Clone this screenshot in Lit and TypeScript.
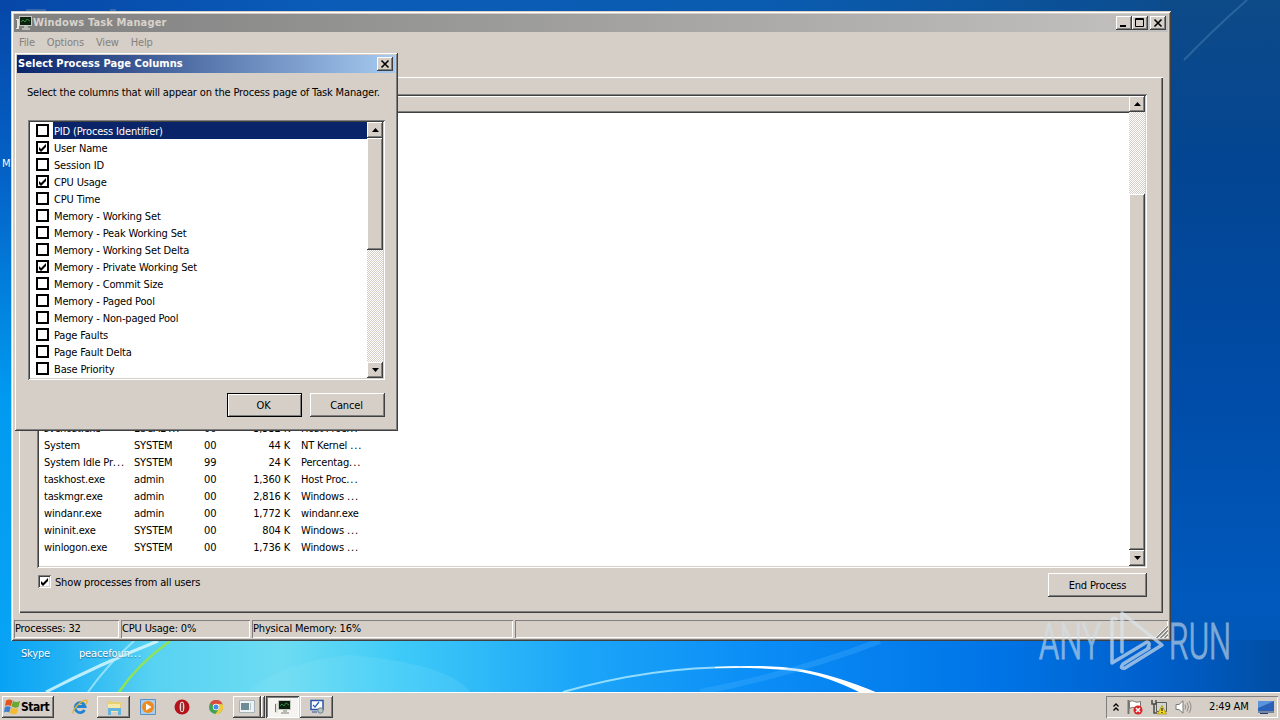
import { LitElement, html, css, svg } from 'lit';
import { customElement, property } from 'lit/decorators.js';
import { classMap } from 'lit/directives/class-map.js';

interface ProcessRow {
  name: string;
  user: string;
  cpu: string;
  memory: string;
  description: string;
}

interface ColumnOption {
  label: string;
  checked: boolean;
}

const PROCESSES: ProcessRow[] = [
  { name: 'svchost.exe', user: 'LOCAL ...', cpu: '00', memory: '3,532 K', description: 'Host Proc...' },
  { name: 'System', user: 'SYSTEM', cpu: '00', memory: '44 K', description: 'NT Kernel ...' },
  { name: 'System Idle Pr...', user: 'SYSTEM', cpu: '99', memory: '24 K', description: 'Percentag...' },
  { name: 'taskhost.exe', user: 'admin', cpu: '00', memory: '1,360 K', description: 'Host Proc...' },
  { name: 'taskmgr.exe', user: 'admin', cpu: '00', memory: '2,816 K', description: 'Windows ...' },
  { name: 'windanr.exe', user: 'admin', cpu: '00', memory: '1,772 K', description: 'windanr.exe' },
  { name: 'wininit.exe', user: 'SYSTEM', cpu: '00', memory: '804 K', description: 'Windows ...' },
  { name: 'winlogon.exe', user: 'SYSTEM', cpu: '00', memory: '1,736 K', description: 'Windows ...' },
];

const COLUMNS: ColumnOption[] = [
  { label: 'PID (Process Identifier)', checked: false },
  { label: 'User Name', checked: true },
  { label: 'Session ID', checked: false },
  { label: 'CPU Usage', checked: true },
  { label: 'CPU Time', checked: false },
  { label: 'Memory - Working Set', checked: false },
  { label: 'Memory - Peak Working Set', checked: false },
  { label: 'Memory - Working Set Delta', checked: false },
  { label: 'Memory - Private Working Set', checked: true },
  { label: 'Memory - Commit Size', checked: false },
  { label: 'Memory - Paged Pool', checked: false },
  { label: 'Memory - Non-paged Pool', checked: false },
  { label: 'Page Faults', checked: false },
  { label: 'Page Fault Delta', checked: false },
  { label: 'Base Priority', checked: false },
];

const base = css`
  * {
    box-sizing: border-box;
  }
  svg {
    display: block;
  }
  .raised {
    background: #d5cfc8;
    box-shadow: inset -1px -1px #404040, inset 1px 1px #ffffff, inset -2px -2px #808080;
  }
  .dots {
    letter-spacing: 0.9px;
  }
`;

const checkMark = svg`<path d="M0 2v3l2 2 5-5V-1L2 4z" />`;

const monitorIcon = html`
  <svg width="16" height="16" viewBox="0 0 16 16">
    <path d="M0 4h3v10H0z" fill="#e4e4dc" />
    <path d="M0.5 5v8" stroke="#777" />
    <rect x="3" y="1" width="13" height="10" fill="#c4c8c0" />
    <rect x="4" y="2" width="11" height="8" fill="#0c2010" />
    <path d="M5 7l2-2 2 2 2-3 3 2" fill="none" stroke="#2f8a3b" />
    <path d="M8 11h4v2h2v2H6v-2h2z" fill="#b8bab4" />
  </svg>
`;

// Truncated labels get a wider ellipsis than the body text spacing.
function clipped(text: string) {
  return text.endsWith('...') ? html`${text.slice(0, -3)}<span class="dots">...</span>` : text;
}

@customElement('scroll-bar')
export class ScrollBar extends LitElement {
  static styles = [
    base,
    css`
      :host {
        display: flex;
        flex-direction: column;
        width: 16px;
        background: repeating-conic-gradient(#ffffff 0 25%, #d5cfc8 0 50%) 0 0 / 2px 2px;
      }
      .arrow {
        height: 16px;
        flex: none;
        display: flex;
        align-items: center;
        justify-content: center;
      }
      .thumb {
        flex: none;
      }
      .rest {
        flex: 1;
      }
    `,
  ];

  @property({ type: Number }) offset = 0;
  @property({ type: Number }) size = 100;

  render() {
    return html`
      <div class="arrow raised">
        <svg width="7" height="4" viewBox="0 0 7 4"><path d="M0 4L3.5 0 7 4z" /></svg>
      </div>
      <div style="height:${this.offset}px"></div>
      <div class="thumb raised" style="height:${this.size}px"></div>
      <div class="rest"></div>
      <div class="arrow raised">
        <svg width="7" height="4" viewBox="0 0 7 4"><path d="M0 0h7L3.5 4z" /></svg>
      </div>
    `;
  }
}

@customElement('caption-button')
export class CaptionButton extends LitElement {
  static styles = [
    base,
    css`
      :host {
        display: block;
        width: 16px;
        height: 14px;
      }
      .raised {
        height: 100%;
      }
      path {
        fill: none;
        stroke: #000;
      }
    `,
  ];

  @property({ type: String }) kind = 'close';

  glyph() {
    switch (this.kind) {
      case 'minimize':
        return svg`<path d="M4 10h6" stroke-width="2" />`;
      case 'maximize':
        return svg`<path d="M3.5 2.5h8v8h-8zM3 3.5h9" />`;
      default:
        return svg`<path d="M4.5 3.5l7 7M11.5 3.5l-7 7" stroke-width="1.6" />`;
    }
  }

  render() {
    return html`
      <div class="raised">
        <svg width="16" height="14" viewBox="0 0 16 14">${this.glyph()}</svg>
      </div>
    `;
  }
}

@customElement('task-manager')
export class TaskManager extends LitElement {
  static styles = [
    base,
    css`
      :host {
        display: flex;
        flex-direction: column;
        padding: 3px;
        background: #d5cfc8;
        box-shadow: inset 1px 1px #d5cfc8, inset -1px -1px #404040, inset 2px 2px #ffffff, inset -2px -2px #808080;
      }
      .title {
        height: 18px;
        flex: none;
        display: flex;
        align-items: center;
        padding: 0 2px;
        background: linear-gradient(90deg, #808080, #c2c1bf);
        color: #d8d2ca;
        font-weight: bold;
        letter-spacing: 0.15px;
      }
      .title span {
        flex: 1;
        padding-left: 1px;
      }
      .title .close {
        margin-left: 2px;
      }
      .menu {
        height: 20px;
        flex: none;
        display: flex;
        align-items: center;
        padding: 2px 0 0 5px;
        gap: 12px;
        color: #85817c;
      }
      .page {
        flex: 1;
        min-height: 0;
        margin: 25px 5px 7px 5px;
        padding: 17px 16px 14px 18px;
        display: flex;
        flex-direction: column;
        box-shadow: inset 1px 1px #ffffff, inset -1px -1px #404040, inset -2px -2px #808080;
      }
      .list {
        height: 474px;
        flex: none;
        display: flex;
        padding: 2px;
        background: #ffffff;
        box-shadow: inset 1px 1px #808080, inset -1px -1px #ffffff, inset 2px 2px #404040, inset -2px -2px #d5cfc8;
      }
      .table {
        flex: 1;
        display: flex;
        flex-direction: column;
      }
      .header {
        height: 17px;
        flex: none;
        background: #d5cfc8;
        box-shadow: inset 0 1px #ffffff, inset 0 -1px #404040, inset 0 -2px #808080;
      }
      .rows {
        flex: 1;
        min-height: 0;
        display: flex;
        flex-direction: column;
        justify-content: flex-end;
        padding: 0 0 10px 5px;
      }
      .row {
        height: 17px;
        flex: none;
        display: grid;
        grid-template-columns: 90px 70px 45px 41px 100px;
        align-items: center;
      }
      .memory {
        justify-self: end;
      }
      .description {
        padding-left: 11px;
      }
      .actions {
        flex: 1;
        display: flex;
        justify-content: space-between;
        align-items: flex-start;
      }
      .all-users {
        display: flex;
        align-items: flex-start;
        gap: 4px;
        padding: 7px 0 0 1px;
      }
      .all-users div:last-child {
        padding-top: 1px;
      }
      .box {
        width: 13px;
        height: 13px;
        background: #ffffff;
        box-shadow: inset 1px 1px #808080, inset -1px -1px #ffffff, inset 2px 2px #404040, inset -2px -2px #d5cfc8;
      }
      .end {
        width: 99px;
        height: 24px;
        margin-top: 5px;
        padding-top: 1px;
        display: flex;
        align-items: center;
        justify-content: center;
      }
      .status {
        height: 18px;
        flex: none;
        display: grid;
        grid-template-columns: 105px 129px 261px 1fr;
        gap: 2px;
      }
      .cell {
        display: flex;
        align-items: center;
        padding-left: 1px;
        box-shadow: inset 1px 1px #808080, inset -1px -1px #ffffff;
      }
      .last {
        justify-content: flex-end;
        align-items: flex-end;
      }
    `,
  ];

  render() {
    return html`
      <div class="title">
        ${monitorIcon}
        <span>Windows Task Manager</span>
        <caption-button kind="minimize"></caption-button>
        <caption-button kind="maximize"></caption-button>
        <caption-button class="close"></caption-button>
      </div>
      <div class="menu">
        <div>File</div>
        <div>Options</div>
        <div>View</div>
        <div>Help</div>
      </div>
      <div class="page">
        <div class="list">
          <div class="table">
            <div class="header"></div>
            <div class="rows">
              ${PROCESSES.map(
                (p) => html`
                  <div class="row">
                    <div>${clipped(p.name)}</div>
                    <div>${clipped(p.user)}</div>
                    <div>${p.cpu}</div>
                    <div class="memory">${p.memory}</div>
                    <div class="description">${clipped(p.description)}</div>
                  </div>
                `
              )}
            </div>
          </div>
          <scroll-bar .offset=${82} .size=${356}></scroll-bar>
        </div>
        <div class="actions">
          <div class="all-users">
            <div class="box">
              <svg width="13" height="13" viewBox="-3 -4 13 13">${checkMark}</svg>
            </div>
            <div>Show processes from all users</div>
          </div>
          <div class="end raised">End Process</div>
        </div>
      </div>
      <div class="status">
        <div class="cell">Processes: 32</div>
        <div class="cell">CPU Usage: 0%</div>
        <div class="cell">Physical Memory: 16%</div>
        <div class="cell last">
          <svg width="13" height="13" viewBox="0 0 13 13">
            <path d="M0 13L13 0M4 13l9-9M8 13l5-5" stroke="#ffffff" />
            <path d="M1.5 13L13 1.5M5.5 13L13 5.5M9.5 13L13 9.5" stroke="#808080" stroke-width="1.5" />
          </svg>
        </div>
      </div>
    `;
  }
}

@customElement('columns-dialog')
export class ColumnsDialog extends LitElement {
  static styles = [
    base,
    css`
      :host {
        display: flex;
        flex-direction: column;
        padding: 3px;
        background: #d5cfc8;
        box-shadow: inset 1px 1px #d5cfc8, inset -1px -1px #404040, inset 2px 2px #ffffff, inset -2px -2px #808080;
      }
      .title {
        height: 18px;
        flex: none;
        display: flex;
        align-items: center;
        justify-content: space-between;
        padding: 0 2px 0 1px;
        background: linear-gradient(90deg, #0a246a, #a6caf0);
        color: #ffffff;
        font-weight: bold;
        letter-spacing: 0.05px;
      }
      .hint {
        height: 38px;
        flex: none;
        display: flex;
        align-items: center;
        padding: 1px 0 0 10px;
        white-space: nowrap;
      }
      .list {
        height: 260px;
        flex: none;
        margin: 9px 10px 0 11px;
        padding: 2px;
        display: flex;
        background: #ffffff;
        box-shadow: inset 1px 1px #808080, inset -1px -1px #ffffff, inset 2px 2px #404040, inset -2px -2px #d5cfc8;
      }
      .options {
        flex: 1;
      }
      .option {
        height: 17px;
        display: flex;
        align-items: center;
        padding-left: 6px;
        gap: 4px;
      }
      .box {
        width: 13px;
        height: 13px;
        flex: none;
        border: 2px solid #000;
        background: #ffffff;
      }
      .label {
        flex: 1;
        height: 17px;
        line-height: 19px;
        padding-left: 1px;
      }
      .selected .label {
        background: #0a246a;
        color: #ffffff;
      }
      .buttons {
        display: flex;
        justify-content: flex-end;
        gap: 8px;
        padding: 13px 10px 0 0;
      }
      .button {
        width: 75px;
        height: 24px;
        padding: 1px 2px 0 0;
        display: flex;
        align-items: center;
        justify-content: center;
      }
      .default {
        border: 1px solid #000;
        box-shadow: inset 1px 1px #ffffff, inset -1px -1px #808080;
      }
    `,
  ];

  render() {
    return html`
      <div class="title">
        <span>Select Process Page Columns</span>
        <caption-button></caption-button>
      </div>
      <div class="hint">Select the columns that will appear on the Process page of Task Manager.</div>
      <div class="list">
        <div class="options">
          ${COLUMNS.map(
            (c, i) => html`
              <div class=${classMap({ option: true, selected: i === 0 })}>
                <div class="box">
                  ${c.checked ? html`<svg width="9" height="9" viewBox="-1 -2 9 9">${checkMark}</svg>` : ''}
                </div>
                <div class="label">${c.label}</div>
              </div>
            `
          )}
        </div>
        <scroll-bar .offset=${0} .size=${112}></scroll-bar>
      </div>
      <div class="buttons">
        <div class="button raised default">OK</div>
        <div class="button raised">Cancel</div>
      </div>
    `;
  }
}

@customElement('task-bar')
export class TaskBar extends LitElement {
  static styles = [
    base,
    css`
      :host {
        display: flex;
        align-items: center;
        padding: 3px 2px 2px;
        background: #d5cfc8;
        border-top: 1px solid #ffffff;
      }
      .start {
        width: 52px;
        height: 22px;
        display: flex;
        align-items: center;
        gap: 1px;
        padding-left: 2px;
        font-size: 12px;
        font-weight: bold;
        letter-spacing: -0.5px;
      }
      .launch {
        display: flex;
        margin-left: 9px;
        gap: 1px;
      }
      .item {
        width: 33px;
        height: 22px;
        display: flex;
        align-items: center;
        justify-content: center;
      }
      .group {
        width: 28px;
      }
      .stack {
        width: 4px;
        height: 22px;
        margin-left: -1px;
      }
      .pressed {
        background: #f6f4f1;
        box-shadow: inset 1px 1px #404040, inset -1px -1px #ffffff, inset 2px 2px #808080;
      }
      .spacer {
        flex: 1;
      }
      .tray {
        width: 172px;
        height: 22px;
        display: flex;
        align-items: center;
        padding-left: 7px;
        gap: 8px;
        box-shadow: inset 1px 1px #808080, inset -1px -1px #ffffff;
      }
      .clock {
        margin: 0 1px 0 9px;
        white-space: nowrap;
      }
    `,
  ];

  render() {
    return html`
      <div class="start raised">
        <svg width="16" height="16" viewBox="0 0 16 16">
          <path d="M2 1.500q3.500-2 6.500 0L7 7q-3-1.500-6 0z" fill="#e2551f" />
          <path d="M9 2q3.500 2 7 0l-1.500 6q-3.500 1.500-7-.5z" fill="#6aa832" />
          <path d="M.8 8q3.200-1.500 6 0L5.200 13.500q-3-1.500-5.200 0z" fill="#3f7fd0" />
          <path d="M7.300 8.500q3.500 2 7 .5l-1.500 5.500q-3.500 1.500-7-.5z" fill="#f4bb2c" />
        </svg>
        <span>Start</span>
      </div>
      <div class="launch">
        <div class="item">
          <svg width="16" height="16" viewBox="0 0 16 16">
            <path d="M12.500 11A5 5 0 1 1 13 7.500H5" fill="none" stroke="#2482d2" stroke-width="2.800" />
            <path d="M1.500 14.500C-1 12 8 2 14 1.200c1.500 0 1.500 1.800 0 4" fill="none" stroke="#e6b52c" stroke-width="1.300" />
          </svg>
        </div>
        <div class="item raised">
          <svg width="16" height="16" viewBox="0 0 16 16">
            <path d="M1 2h5l1 1h8v10H1z" fill="#e8cf74" />
            <path d="M2 5h12v8H2z" fill="#f6e9a8" />
            <path d="M2 9h13v7h-3v-4H5v4H2z" fill="#63b5dd" />
          </svg>
        </div>
        <div class="item">
          <svg width="16" height="16" viewBox="0 0 16 16">
            <path d="M.5.5h15v15H.5z" fill="#a9cdea" stroke="#5892c8" />
            <circle cx="8" cy="8" r="6" fill="#ef8a1d" />
            <path d="M6 4.500L11.500 8 6 11.500z" fill="#ffffff" />
          </svg>
        </div>
        <div class="item">
          <svg width="16" height="16" viewBox="0 0 16 16">
            <circle cx="8" cy="8" r="7.500" fill="#b5121b" />
            <ellipse cx="8" cy="8" rx="2.400" ry="5.200" fill="#e4dcd6" />
            <path d="M8 4v8" stroke="#7a1015" stroke-width="1.500" />
          </svg>
        </div>
        <div class="item">
          <svg width="14" height="14" viewBox="0 0 14 14">
            <circle cx="7" cy="7" r="7" fill="#3ea254" />
            <path d="M7 7L.9 3.500A7 7 0 0 1 13.500 4.200L7 4z" fill="#dd4b3c" />
            <path d="M13.500 4.200A7 7 0 0 1 6.500 14L10 8.500 8 4z" fill="#f6c83c" />
            <circle cx="7" cy="7" r="3.200" fill="#ffffff" />
            <circle cx="7" cy="7" r="2.500" fill="#4a8bea" />
          </svg>
        </div>
        <div class="item group raised">
          <svg width="16" height="14" viewBox="0 0 16 14">
            <path d="M.5.5h15v12H.5z" fill="#eef2f4" stroke="#a8b4ba" />
            <path d="M2 3h8v7H2z" fill="#6d8d96" />
            <path d="M11.500 3v7" stroke="#b6c2c8" />
          </svg>
        </div>
        <div class="stack raised"></div>
        <div class="item pressed">${monitorIcon}</div>
        <div class="item raised">
          <svg width="16" height="16" viewBox="0 0 16 16">
            <path d="M2 1.500h12v9H2z" fill="#ffffff" stroke="#2a55a8" stroke-width="1.500" />
            <path d="M4 6l2 2 4-5" fill="none" stroke="#2a62c0" stroke-width="1.300" />
            <path d="M3 13h5" stroke="#2a55a8" />
            <circle cx="11.500" cy="11.500" r="2.700" fill="#b8c4c8" stroke="#6e8288" />
          </svg>
        </div>
      </div>
      <div class="spacer"></div>
      <div class="tray">
        <svg width="6" height="9" viewBox="0 0 6 9">
          <path d="M.5 3.500L3 1l2.500 2.500M.5 7.500L3 5l2.500 2.500" fill="none" stroke="#000" stroke-width="1.300" />
        </svg>
        <svg width="16" height="16" viewBox="0 0 16 16">
          <path d="M1.500 1v14" stroke="#77736e" stroke-width="2" />
          <path d="M2.500 2.500q3-1.500 5 0t6 0v7q-3 1-5.500-.5t-5.500.5z" fill="#ffffff" stroke="#77736e" />
          <circle cx="11" cy="11" r="4.500" fill="#d9252a" />
          <path d="M9 9l4 4M13 9l-4 4" stroke="#ffffff" stroke-width="1.500" />
        </svg>
        <svg width="16" height="16" viewBox="0 0 16 16">
          <path d="M5.500 3.500h10v9h-10z" fill="#d2d4d0" stroke="#5d5d58" />
          <path d="M1 1v4h4V1M3 5v9h3" fill="none" stroke="#4c4c48" stroke-width="1.500" />
          <path d="M11 6.500L15.500 15h-9z" fill="#f6d91c" stroke="#a28a10" stroke-width=".7" />
          <path d="M11 9v3M11 13v1" stroke="#222" stroke-width="1.200" />
        </svg>
        <svg width="17" height="14" viewBox="0 0 17 14">
          <path d="M1 4.500h3L8 .8v12.400L4 9.500H1z" fill="#ffffff" stroke="#7c7a76" />
          <path d="M10 4.500q1.500 2.500 0 5M12 2.500q3 4.500 0 9M14 1q4 6 0 12" fill="none" stroke="#8e8c88" />
        </svg>
        <div class="clock">2:49 AM</div>
        <svg width="16" height="13" viewBox="0 0 16 13">
          <path d="M0 0h16v10H0z" fill="#2a62b8" />
          <path d="M0 0h16L0 7z" fill="#5b94dc" />
          <path d="M0 11h16M2 12.500h8" stroke="#1c3c78" />
        </svg>
      </div>
    `;
  }
}

@customElement('app-root')
export class AppRoot extends LitElement {
  static styles = [
    base,
    css`
      :host {
        position: relative;
        display: block;
        width: 1280px;
        height: 720px;
        overflow: hidden;
        font: 11px/14px 'DejaVu Sans Condensed', 'DejaVu Sans', sans-serif;
        letter-spacing: -0.16px;
        font-stretch: condensed;
        color: #000;
        cursor: default;
      }
      .wallpaper,
      .watermark {
        position: absolute;
        left: 0;
        top: 0;
      }
      .shortcut {
        position: absolute;
        color: #ffffff;
        text-shadow: 0 1px 1px rgba(0, 40, 90, 0.5);
      }
      .skype {
        left: 21px;
        top: 647px;
      }
      .file {
        left: 79px;
        top: 647px;
      }
      .cut {
        left: 2px;
        top: 157px;
      }
      task-manager {
        position: absolute;
        left: 11px;
        top: 11px;
        width: 1160px;
        height: 630px;
      }
      columns-dialog {
        position: absolute;
        left: 14px;
        top: 52px;
        width: 384px;
        height: 379px;
      }
      task-bar {
        position: absolute;
        left: 0;
        top: 692px;
        width: 1280px;
        height: 28px;
      }
      .brand {
        font: 300 50px Roboto, sans-serif;
        letter-spacing: 0;
      }
    `,
  ];

  render() {
    return html`
      <svg class="wallpaper" width="1280" height="720" viewBox="0 0 1280 720">
        <defs>
          <linearGradient id="side" x1="0" y1="0" x2="0" y2="1">
            <stop offset="0" stop-color="#0647a8" />
            <stop offset="0.250" stop-color="#0463c8" />
            <stop offset="0.550" stop-color="#009af0" />
            <stop offset="1" stop-color="#0aa6f6" />
          </linearGradient>
          <linearGradient id="top" x1="0" y1="0" x2="1" y2="0">
            <stop offset="0" stop-color="#0647a8" />
            <stop offset="0.250" stop-color="#0a5cb8" />
            <stop offset="0.600" stop-color="#0a5cb0" />
            <stop offset="1" stop-color="#0c4884" />
          </linearGradient>
          <linearGradient id="right" x1="0" y1="0" x2="0" y2="1">
            <stop offset="0" stop-color="#0d4a88" />
            <stop offset="0.250" stop-color="#034592" />
            <stop offset="0.600" stop-color="#004ca8" />
            <stop offset="0.900" stop-color="#0059bc" />
            <stop offset="1" stop-color="#0058ba" />
          </linearGradient>
          <linearGradient id="floor" x1="0" y1="0" x2="1" y2="0">
            <stop offset="0" stop-color="#08a2f4" />
            <stop offset="0.050" stop-color="#22b2f4" />
            <stop offset="0.120" stop-color="#58d2f2" />
            <stop offset="0.220" stop-color="#6ddcf2" />
            <stop offset="0.310" stop-color="#3fcbf8" />
            <stop offset="0.450" stop-color="#1ca6f8" />
            <stop offset="0.600" stop-color="#0a8cf6" />
            <stop offset="0.780" stop-color="#0074e6" />
            <stop offset="0.900" stop-color="#0060cc" />
            <stop offset="1" stop-color="#004ea4" />
          </linearGradient>
        </defs>
        <rect width="1280" height="720" fill="url(#side)" />
        <rect width="1280" height="12" fill="url(#top)" />
        <rect x="1160" width="120" height="660" fill="url(#right)" />
        <rect y="640" width="1280" height="60" fill="url(#floor)" />
        <path d="M1184 60Q1215 28 1247 0" fill="none" stroke="#4a80b4" stroke-opacity="0.500" stroke-width="2" />
        <path d="M26 10h20M110 10h6" stroke="#a8b4b4" stroke-opacity="0.600" />
        <path d="M46 692Q100 664 158 641" fill="none" stroke="#d4f8ff" stroke-opacity="0.850" stroke-width="3" />
        <path d="M88 692Q108 664 134 641" fill="none" stroke="#b4f0ff" stroke-opacity="0.700" stroke-width="2" />
        <path d="M119 692Q138 664 170 641" fill="none" stroke="#8fe35a" stroke-width="2.500" />
        <path d="M248 692Q280 662 350 655Q450 664 470 692z" fill="#9cecf8" fill-opacity="0.150" />
        <path d="M563 692Q650 667 738 667" fill="none" stroke="#a8e6ff" stroke-opacity="0.850" stroke-width="2" />
        <path d="M715 667Q765 664 800 669Q835 675 878 693H861Q825 675 795 671Q760 667 715 668z" fill="#ffffff" />
        <path d="M700 692Q790 675 880 641" fill="none" stroke="#48b4ff" stroke-opacity="0.300" stroke-width="6" />
      </svg>
      <div class="shortcut cut">M</div>
      <div class="shortcut skype">Skype</div>
      <div class="shortcut file">peacefoun<span class="dots">...</span></div>
      <task-manager></task-manager>
      <columns-dialog></columns-dialog>
      <task-bar></task-bar>
      <svg class="watermark" width="1280" height="720" viewBox="0 0 1280 720">
        <g fill="#d4e0ea" stroke="#d4e0ea" stroke-width="1.200" opacity="0.600">
          <text class="brand" x="1039" y="659" textLength="62" lengthAdjust="spacingAndGlyphs">ANY</text>
          <text class="brand" x="1169" y="659" textLength="62" lengthAdjust="spacingAndGlyphs">RUN</text>
        </g>
        <g fill="none" stroke="#dce6ee" stroke-width="3.500" stroke-linejoin="round" stroke-linecap="round" opacity="0.650">
          <path d="M1122 652V613L1162 645L1125 668Q1119 669 1123 664L1149 648" />
          <path d="M1116 619Q1112 617 1112 621V663L1147 642Q1151 643 1148 647" />
        </g>
      </svg>
    `;
  }
}
